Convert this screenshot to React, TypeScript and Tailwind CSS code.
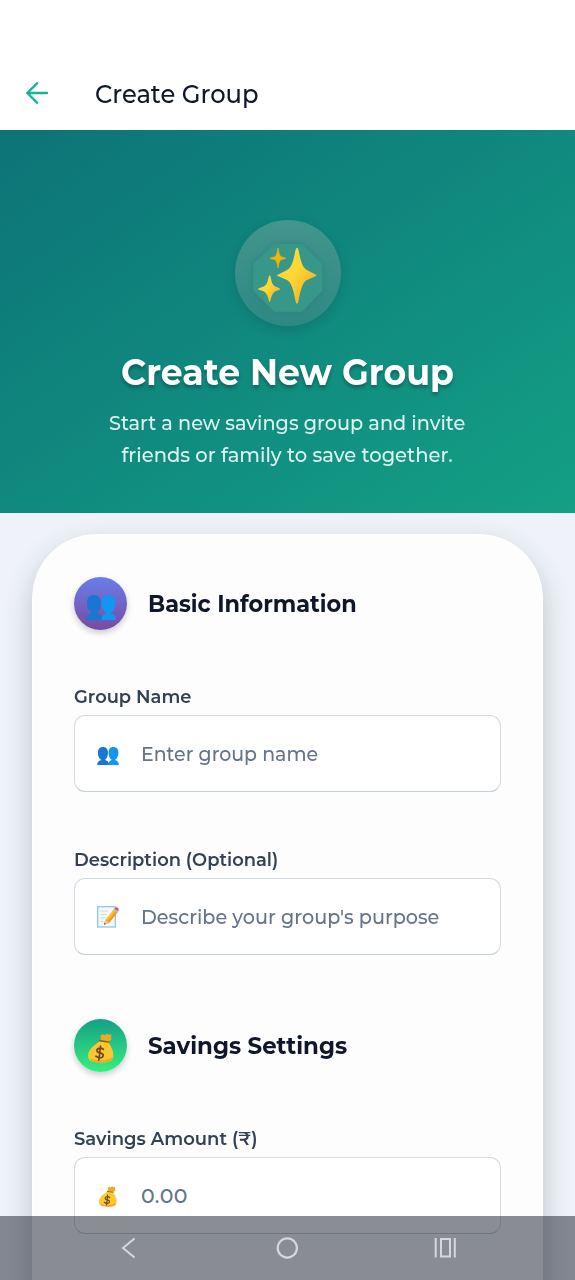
import React from "react";

function SparklesIcon() {
  return (
    <svg viewBox="0 0 106 106" className="size-full">
      <defs>
        <linearGradient id="spark" x1="0" y1="0" x2="1" y2="1">
          <stop offset="0.45" stopColor="#fdd835" />
          <stop offset="0.75" stopColor="#f4b92b" />
        </linearGradient>
        <filter id="soft" x="-20%" y="-20%" width="140%" height="140%">
          <feGaussianBlur stdDeviation="3" />
        </filter>
      </defs>
      <path d="M39 25H67L87.300 45V72L67 92.700H39L18.300 72V45Z" fill="#2f8580" stroke="#2f8580" strokeWidth="3" filter="url(#soft)" />
      <path d="M39 24H67L87.300 44V71L67 91.700H39L18.300 71V44Z" fill="#37988a" />
      <path d="M62 27.700Q63 27.700 63.700 31C66 43 68 48 72 50L80 54.200Q83 55.300 80 56.400L72 60C68 62 66 68 63.700 80Q63 83.700 62 83.700Q61 83.700 60.300 80C58 68 56 62 52 60L44 56.400Q40 55.300 44 54.200L52 50C56 48 58 43 60.300 31Q61 27.700 62 27.700Z" fill="url(#spark)" />
      <path d="M34.700 55.300Q35.300 55.300 35.600 57C36.800 63 38 65.500 40.500 66.500L44.500 68.200Q46 69 44.500 69.800L40.500 71.300C38 72.500 36.800 75 35.600 80Q35.300 82 34.700 82Q34 82 33.700 80C32.500 75 31 72.500 28.500 71.300L24 69.800Q22 69 24 68.200L28.500 66.500C31 65.500 32.500 63 33.700 57Q34 55.300 34.700 55.300Z" fill="url(#spark)" />
      <path d="M43 28.300C44 34 44.500 36 46.500 36.900L50.700 38.300L46.500 39.500C44.500 40.300 44 42 43 47.700C42 42 41.500 40.300 39.500 39.500L35 38.300L39.500 36.900C41.500 36 42 34 43 28.300Z" fill="#f4b400" stroke="#f4b400" strokeWidth="0.8" />
    </svg>
  );
}

function PeopleIcon({ className }: { className: string }) {
  return (
    <svg viewBox="0 0 30 25" className={className}>
      <path d="M0 25C0 20.500 2.500 19 6 18C2.500 16 1 12.500 1 8C1 3 3.500 0 7.800 0C12.500 0 15 3 15 8C15 12.500 13.500 16 10.500 18C14 19 16.500 20.500 16.500 25Z" fill="#1976d2" />
      <path d="M15.500 25C15.500 21 17 19 20.500 18C17 16 15.800 12.500 15.800 8C15.800 3 18 0 22.500 0C27 0 29.500 3 29.500 8C29.500 12.500 28 16 24.500 18C28 19 30 20.500 30 25Z" fill="#1495f0" />
    </svg>
  );
}

function MoneyBagIcon({ className }: { className: string }) {
  return (
    <svg viewBox="0 0 28 31" className={className}>
      <path d="M13.500 2.500L16 1.200L18 2.300L20 .4L22 1.700L24.800 1.500L24.400 4.500L24.800 7L21.500 9L14 8.200Z" fill="#f0a81c" />
      <path d="M13 8.500L21.500 9.500C25 14 27.500 20 26.500 25C25.500 29.500 22 30.500 13.500 30.500C5 30.500 1 29 .7 24C.3 18.500 5 13.500 13 8.500Z" fill="#fdc82f" />
      <path d="M3 26C7 29 18 29.500 26 25C25 29.500 22 30.500 13.500 30.500C7 30.500 3.500 29.700 3 26Z" fill="#f2a71f" />
      <path d="M13 8L21.500 9.300" stroke="#8a5a2b" strokeWidth="1.400" strokeLinecap="round" />
      <path d="M16.500 17C13.500 14.500 9.500 16 9.800 18.500C10.200 21.500 16.200 19.500 16.300 23C16.300 26 11.500 26.500 8.700 24M13.500 13.500L11.800 28" fill="none" stroke="#6d4520" strokeWidth="1.700" strokeLinecap="round" />
    </svg>
  );
}

function MemoIcon() {
  return (
    <svg viewBox="0 0 22 22" className="size-[22px]">
      <rect x=".7" y=".7" width="17.600" height="20.300" fill="#f5f8fa" stroke="#82c5ea" strokeWidth="1.200" />
      <path d="M3 5H11M3 8.500H10M3 12H8M3 15.500H6" stroke="#c5d3dc" strokeWidth=".8" />
      <path d="M7 18.800L8.200 14L17 3L20.800 6L12 17Z" fill="#fbc02d" />
      <path d="M10 15.500L19 4.500L20.800 6L12 17Z" fill="#f19a1b" />
      <path d="M7 18.800L8.200 14L12 17Z" fill="#e8c39c" />
      <path d="M7 18.800L7.500 16.800L8.900 17.900Z" fill="#444" />
      <path d="M16.100 4.100L17.400 2.500L21.200 5.500L19.900 7.100Z" fill="#b0bec5" />
      <path d="M17.400 2.500Q18.500.600 20.500 1.500Q22.500 3 21.200 5.500Z" fill="#e8505b" />
    </svg>
  );
}

function Field({ label, icon, children }: { label: React.ReactNode; icon: React.ReactNode; children: React.ReactNode }) {
  return (
    <div>
      <div className="h-[30px] text-[18.500px] leading-6 font-semibold whitespace-nowrap text-[#334155]">{label}</div>
      <div className="flex h-[77px] items-center rounded-[11px] border border-[#d3dbe3] border-b-[#c3d0d8] bg-white pt-px pl-[22px]">
        <div className="flex w-[44px]">{icon}</div>
        <div className="text-[20.500px] leading-7 font-medium whitespace-nowrap text-[#64748b]">{children}</div>
      </div>
    </div>
  );
}

function Section({ badge, children }: { badge: React.ReactNode; children: React.ReactNode }) {
  return (
    <div className="flex h-[53px] items-center gap-[21px]">
      {badge}
      <h2 className="text-[24px] leading-8 font-bold whitespace-nowrap text-[#0f172a]">{children}</h2>
    </div>
  );
}

export default function App() {
  return (
    <div className="relative h-[1280px] w-[575px] overflow-hidden bg-[#eff3f9] font-['Montserrat','Inter',sans-serif]">
      <header className="flex h-[130px] items-center bg-white pt-[56px] pl-[26px]">
        <svg viewBox="0 0 22 22" className="size-[22px]" fill="none" stroke="#17b3a1" strokeWidth="2.400" strokeLinecap="round" strokeLinejoin="round">
          <path d="M21 11H1.500M11 1.300L1.300 11L11 20.700" />
        </svg>
        <h1 className="mt-px ml-[47px] text-[25.500px] leading-8 font-medium text-[#0f172a]">
          <span className="inline-block origin-left scale-x-[0.95]">Create Group</span>
        </h1>
      </header>

      <section className="flex h-[383px] flex-col items-center bg-linear-to-br from-[#0d7377] to-[#14a085] pt-[90px]">
        <div className="size-[106px] rounded-full bg-linear-to-b from-[#43958f] to-[#2d8984] shadow-[0_4px_12px_rgba(0,0,0,0.12)]">
          <SparklesIcon />
        </div>
        <div className="mt-[24px] text-[36px] leading-[44px] font-bold whitespace-nowrap text-white [text-shadow:0_3px_4px_rgba(0,0,0,0.28)]">
          <span className="inline-block scale-x-[0.965]">Create New Group</span>
        </div>
        <p className="mt-[13px] text-center text-[21px] leading-8 font-medium whitespace-nowrap text-[#dcf3ef]">
          <span className="block scale-x-[0.918]">Start a new savings group and invite</span>
          <span className="block scale-x-[0.93]">friends or family to save together.</span>
        </p>
      </section>

      <main className="mx-8 mt-[21px] h-[900px] rounded-[64px] border border-white bg-[#fdfdfe] px-[41px] pt-[42px] shadow-[0_12px_28px_rgba(30,41,59,0.24)]">
        <Section
          badge={
            <div className="flex size-[53px] items-center justify-center rounded-full bg-linear-to-b from-[#667eea] to-[#764ba2] pt-[7px] shadow-[0_3px_6px_rgba(0,0,0,0.2)]">
              <PeopleIcon className="h-[25px] w-[30px]" />
            </div>
          }
        >
          <span className="inline-block origin-left scale-x-[0.933]">Basic Information</span>
        </Section>
        <div className="mt-[55px]">
          <Field label={<span className="inline-block origin-left scale-x-[0.967]">Group Name</span>} icon={<PeopleIcon className="mt-[3px] h-[18px] w-[22px]" />}>
            <span className="inline-block origin-left scale-x-[0.925]">Enter group name</span>
          </Field>
        </div>
        <div className="mt-[56px]">
          <Field label={<span className="inline-block origin-left scale-x-[0.967]">Description (Optional)</span>} icon={<MemoIcon />}>
            <span className="inline-block origin-left scale-x-[0.937]">Describe your group's purpose</span>
          </Field>
        </div>
        <div className="mt-[64px]">
          <Section
            badge={
              <div className="flex size-[53px] items-center justify-center rounded-full bg-linear-to-b from-[#16a085] to-[#38ef7d] pt-[4px] shadow-[0_3px_6px_rgba(0,0,0,0.2)]">
                <MoneyBagIcon className="h-[30px] w-[28px]" />
              </div>
            }
          >
            <span className="inline-block origin-left scale-x-[0.953]">Savings Settings</span>
          </Section>
        </div>
        <div className="mt-[55px]">
          <Field label={<span className="inline-block origin-left scale-x-[0.973]">Savings Amount (₹)</span>} icon={<MoneyBagIcon className="h-[21px] w-[22px]" />}>
            <span className="tracking-[0.4px]">0.00</span>
          </Field>
        </div>
      </main>

      <nav className="absolute inset-x-0 bottom-0 h-16 bg-[#161b29]/50">
        <svg viewBox="0 0 575 64" className="h-16 w-full" fill="none" stroke="#d5d7dc" strokeWidth="2">
          <path d="M134.500 22.500L123 32L134.500 41.500" />
          <circle cx="287.300" cy="32" r="9.600" strokeWidth="2.200" />
          <path d="M435.700 22V41.500M454.800 22V41.500M441 23H450V40.500H441Z" />
        </svg>
      </nav>
    </div>
  );
}
